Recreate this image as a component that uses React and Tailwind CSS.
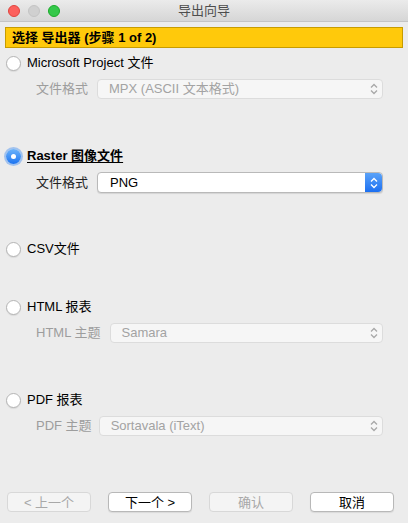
import React from 'react'

const font = { fontFamily: '"Liberation Sans", "Noto Sans CJK SC", sans-serif' }

const Radio = ({ checked }) =>
    checked ? (
        <span className="relative flex h-[15px] w-[15px] shrink-0 items-center justify-center rounded-full bg-gradient-to-b from-[#6cb3fa] to-[#1a73f0] shadow-[0_0_0_2px_rgba(100,160,240,0.55)]">
            <span className="h-[5px] w-[5px] rounded-full bg-white" />
        </span>
    ) : (
        <span className="h-[15px] w-[15px] shrink-0 rounded-full border border-[#b4b4b4] bg-white shadow-[0_1px_1px_rgba(0,0,0,0.08)]" />
    )

const Stepper = ({ active }) =>
    active ? (
        <span className="flex h-full w-[17px] items-center justify-center rounded-r-[4px] bg-gradient-to-b from-[#5aa2f8] to-[#1b6ff1]">
            <Chevrons color="#ffffff" />
        </span>
    ) : (
        <span className="flex h-full w-[17px] items-center justify-center">
            <Chevrons color="#a8a8a8" />
        </span>
    )

const Chevrons = ({ color }) => (
    <svg width="8" height="12" viewBox="0 0 8 12" fill="none" stroke={color} strokeWidth="1.3">
        <path d="M1 4.5 L4 1.5 L7 4.5" />
        <path d="M1 7.5 L4 10.5 L7 7.5" />
    </svg>
)

const Select = ({ value, active, className }) => (
    <div
        className={
            active
                ? 'flex h-[21px] items-center rounded-[4px] border border-[#b9b9b9] bg-white shadow-[0_1px_1px_rgba(0,0,0,0.1)] ' + className
                : 'flex h-[20px] items-center rounded-[4px] border border-[#dcdcdc] bg-[#f6f6f6] ' + className
        }
    >
        <span className={active ? 'flex-1 pl-[12px] text-[13px] text-black' : 'flex-1 pl-[11px] text-[13px] text-[#a3a3a3]'}>{value}</span>
        <Stepper active={active} />
    </div>
)

const Option = ({ label, checked, className = '' }) => (
    <div className={'flex h-[18px] items-center gap-[6px] pl-[6px] ' + className}>
        <Radio checked={checked} />
        <span className={checked ? 'text-[13px] font-bold text-black underline underline-offset-2' : 'text-[13px] text-black'}>{label}</span>
    </div>
)

const Field = ({ label, value, active, className = '', gap = 'gap-[9px]' }) => (
    <div className={'flex items-center pl-[36px] pr-[25px] ' + gap + ' ' + className}>
        <span className={active ? 'text-[13px] text-[#222]' : 'text-[13px] text-[#9d9d9d]'}>{label}</span>
        <Select value={value} active={active} className="flex-1" />
    </div>
)

const Button = ({ children, disabled }) => (
    <button
        className={
            disabled
                ? 'h-[20px] w-[84px] rounded-[4px] border border-[#d8d8d8] bg-[#f4f4f4] text-[13px] text-[#a8a8a8]'
                : 'h-[20px] w-[84px] rounded-[4px] border border-[#b8b8b8] bg-white text-[13px] text-black shadow-[0_1px_1px_rgba(0,0,0,0.08)]'
        }
    >
        {children}
    </button>
)

export default function App() {
    return (
        <div className="flex h-[523px] w-[408px] flex-col bg-[#ececec]" style={font}>
            <div className="relative flex h-[22px] shrink-0 items-center justify-center border-b border-[#c4c4c4] bg-gradient-to-b from-[#ebebeb] to-[#d6d6d6]">
                <div className="absolute left-[8px] top-[5px] flex gap-[8px]">
                    <span className="h-[12px] w-[12px] rounded-full border border-[#e0443e] bg-[#fc605c]" />
                    <span className="h-[12px] w-[12px] rounded-full border border-[#c4c4c4] bg-[#d0d0d0]" />
                    <span className="h-[12px] w-[12px] rounded-full border border-[#1aab29] bg-[#34c84a]" />
                </div>
                <span className="text-[13px] text-[#4d4d4d]">导出向导</span>
            </div>

            <div className="mx-[5px] mt-[5px] flex h-[21px] items-center border border-[#c79c00] bg-[#ffc90b] pl-[6px]">
                <span className="text-[13px] font-bold text-black">选择 导出器 (步骤 1 of 2)</span>
            </div>

            <Option label="Microsoft Project 文件" className="mt-[6px]" />
            <Field label="文件格式" value="MPX (ASCII 文本格式)" className="mt-[7px]" />

            <Option label="Raster 图像文件" checked className="mt-[48px]" />
            <Field label="文件格式" value="PNG" active className="mt-[7px]" />

            <Option label="CSV文件" className="mt-[47px]" />

            <Option label="HTML 报表" className="mt-[40px]" />
            <Field label="HTML 主题" value="Samara" className="mt-[7px]" gap="gap-[9px]" />

            <Option label="PDF 报表" className="mt-[48px]" />
            <Field label="PDF 主题" value="Sortavala (iText)" className="mt-[7px]" gap="gap-[7px]" />

            <div className="mt-[56px] flex gap-[17px] pl-[7px]">
                <Button disabled>&lt; 上一个</Button>
                <Button>下一个 &gt;</Button>
                <Button disabled>确认</Button>
                <Button>取消</Button>
            </div>
        </div>
    )
}
